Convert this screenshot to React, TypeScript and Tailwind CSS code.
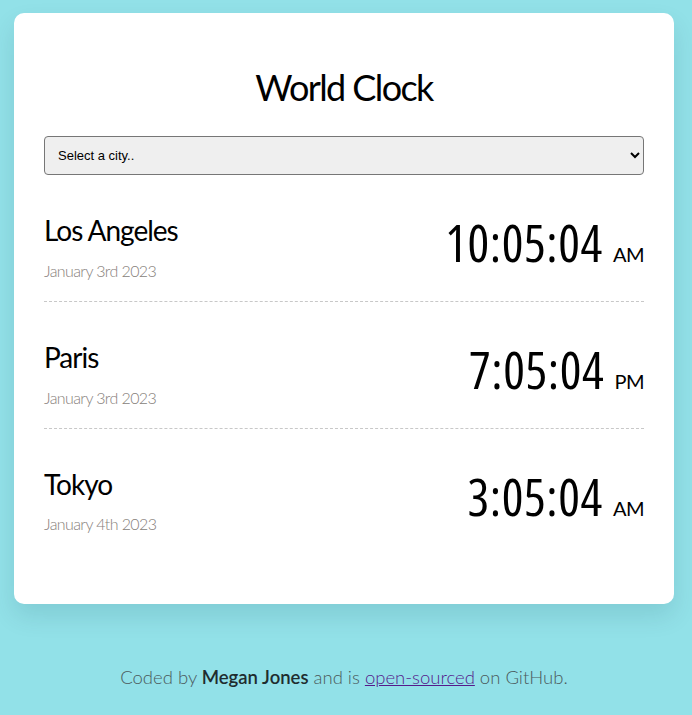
import React from 'react';

const cities = [
    { name: 'Los Angeles', date: 'January 3rd 2023', time: '10:05:04', period: 'AM' },
    { name: 'Paris', date: 'January 3rd 2023', time: '7:05:04', period: 'PM' },
    { name: 'Tokyo', date: 'January 4th 2023', time: '3:05:04', period: 'AM' },
];

export default function App() {
    return (
        <div className="min-h-screen bg-[#92e1e8] pl-[14px] pt-[13px] font-['Lato','Open_Sans',sans-serif] text-black">
            <div className="w-[660px] bg-white rounded-[10px] shadow-[0_12px_24px_rgba(0,60,70,0.12)] px-[30px] pt-[53px] pb-[49px]">
                <h1 className="text-center text-[36px] leading-[1.2] tracking-[-1.6px]">World Clock</h1>

                <select className="mt-[27px] w-full h-[39px] bg-[#efefef] border border-[#767676] rounded-[4px] pl-[9px] pr-[4px] text-[13px] text-black font-['Liberation_Sans',Arial,sans-serif]">
                    <option>Select a city..</option>
                    <option>Sydney</option>
                    <option>London</option>
                </select>

                <div>
                    {cities.map((c, i) => (
                        <div
                            key={c.name}
                            className={`flex justify-between items-start pt-[39px] pb-[21px] ${i < cities.length - 1 ? 'border-b border-dashed border-[#c8c8c8]' : ''}`}
                        >
                            <div>
                                <div className="text-[28px] leading-[1.2] tracking-[-1px]">{c.name}</div>
                                <div className="mt-[13px] text-[16px] leading-[1.2] font-light tracking-[-0.6px] text-[#867e7a]">{c.date}</div>
                            </div>
                            <div className="flex items-baseline gap-[10px] mt-[3px]">
                                <span className="text-[51px] leading-none tracking-[0.6px] font-['Open_Sans',sans-serif] [font-stretch:75%]">{c.time}</span>
                                <span className="text-[20px] leading-none tracking-[-0.5px]">{c.period}</span>
                            </div>
                        </div>
                    ))}
                </div>
            </div>

            <p className="w-[660px] mt-[60px] text-center text-[18.5px] font-light text-[#4b5a5c]">
                Coded by <span className="font-semibold text-[#1f2d2f]">Megan Jones</span> and is{' '}
                <a href="#" className="underline text-[#551a8b]">open-sourced</a> on GitHub.
            </p>
        </div>
    );
}
